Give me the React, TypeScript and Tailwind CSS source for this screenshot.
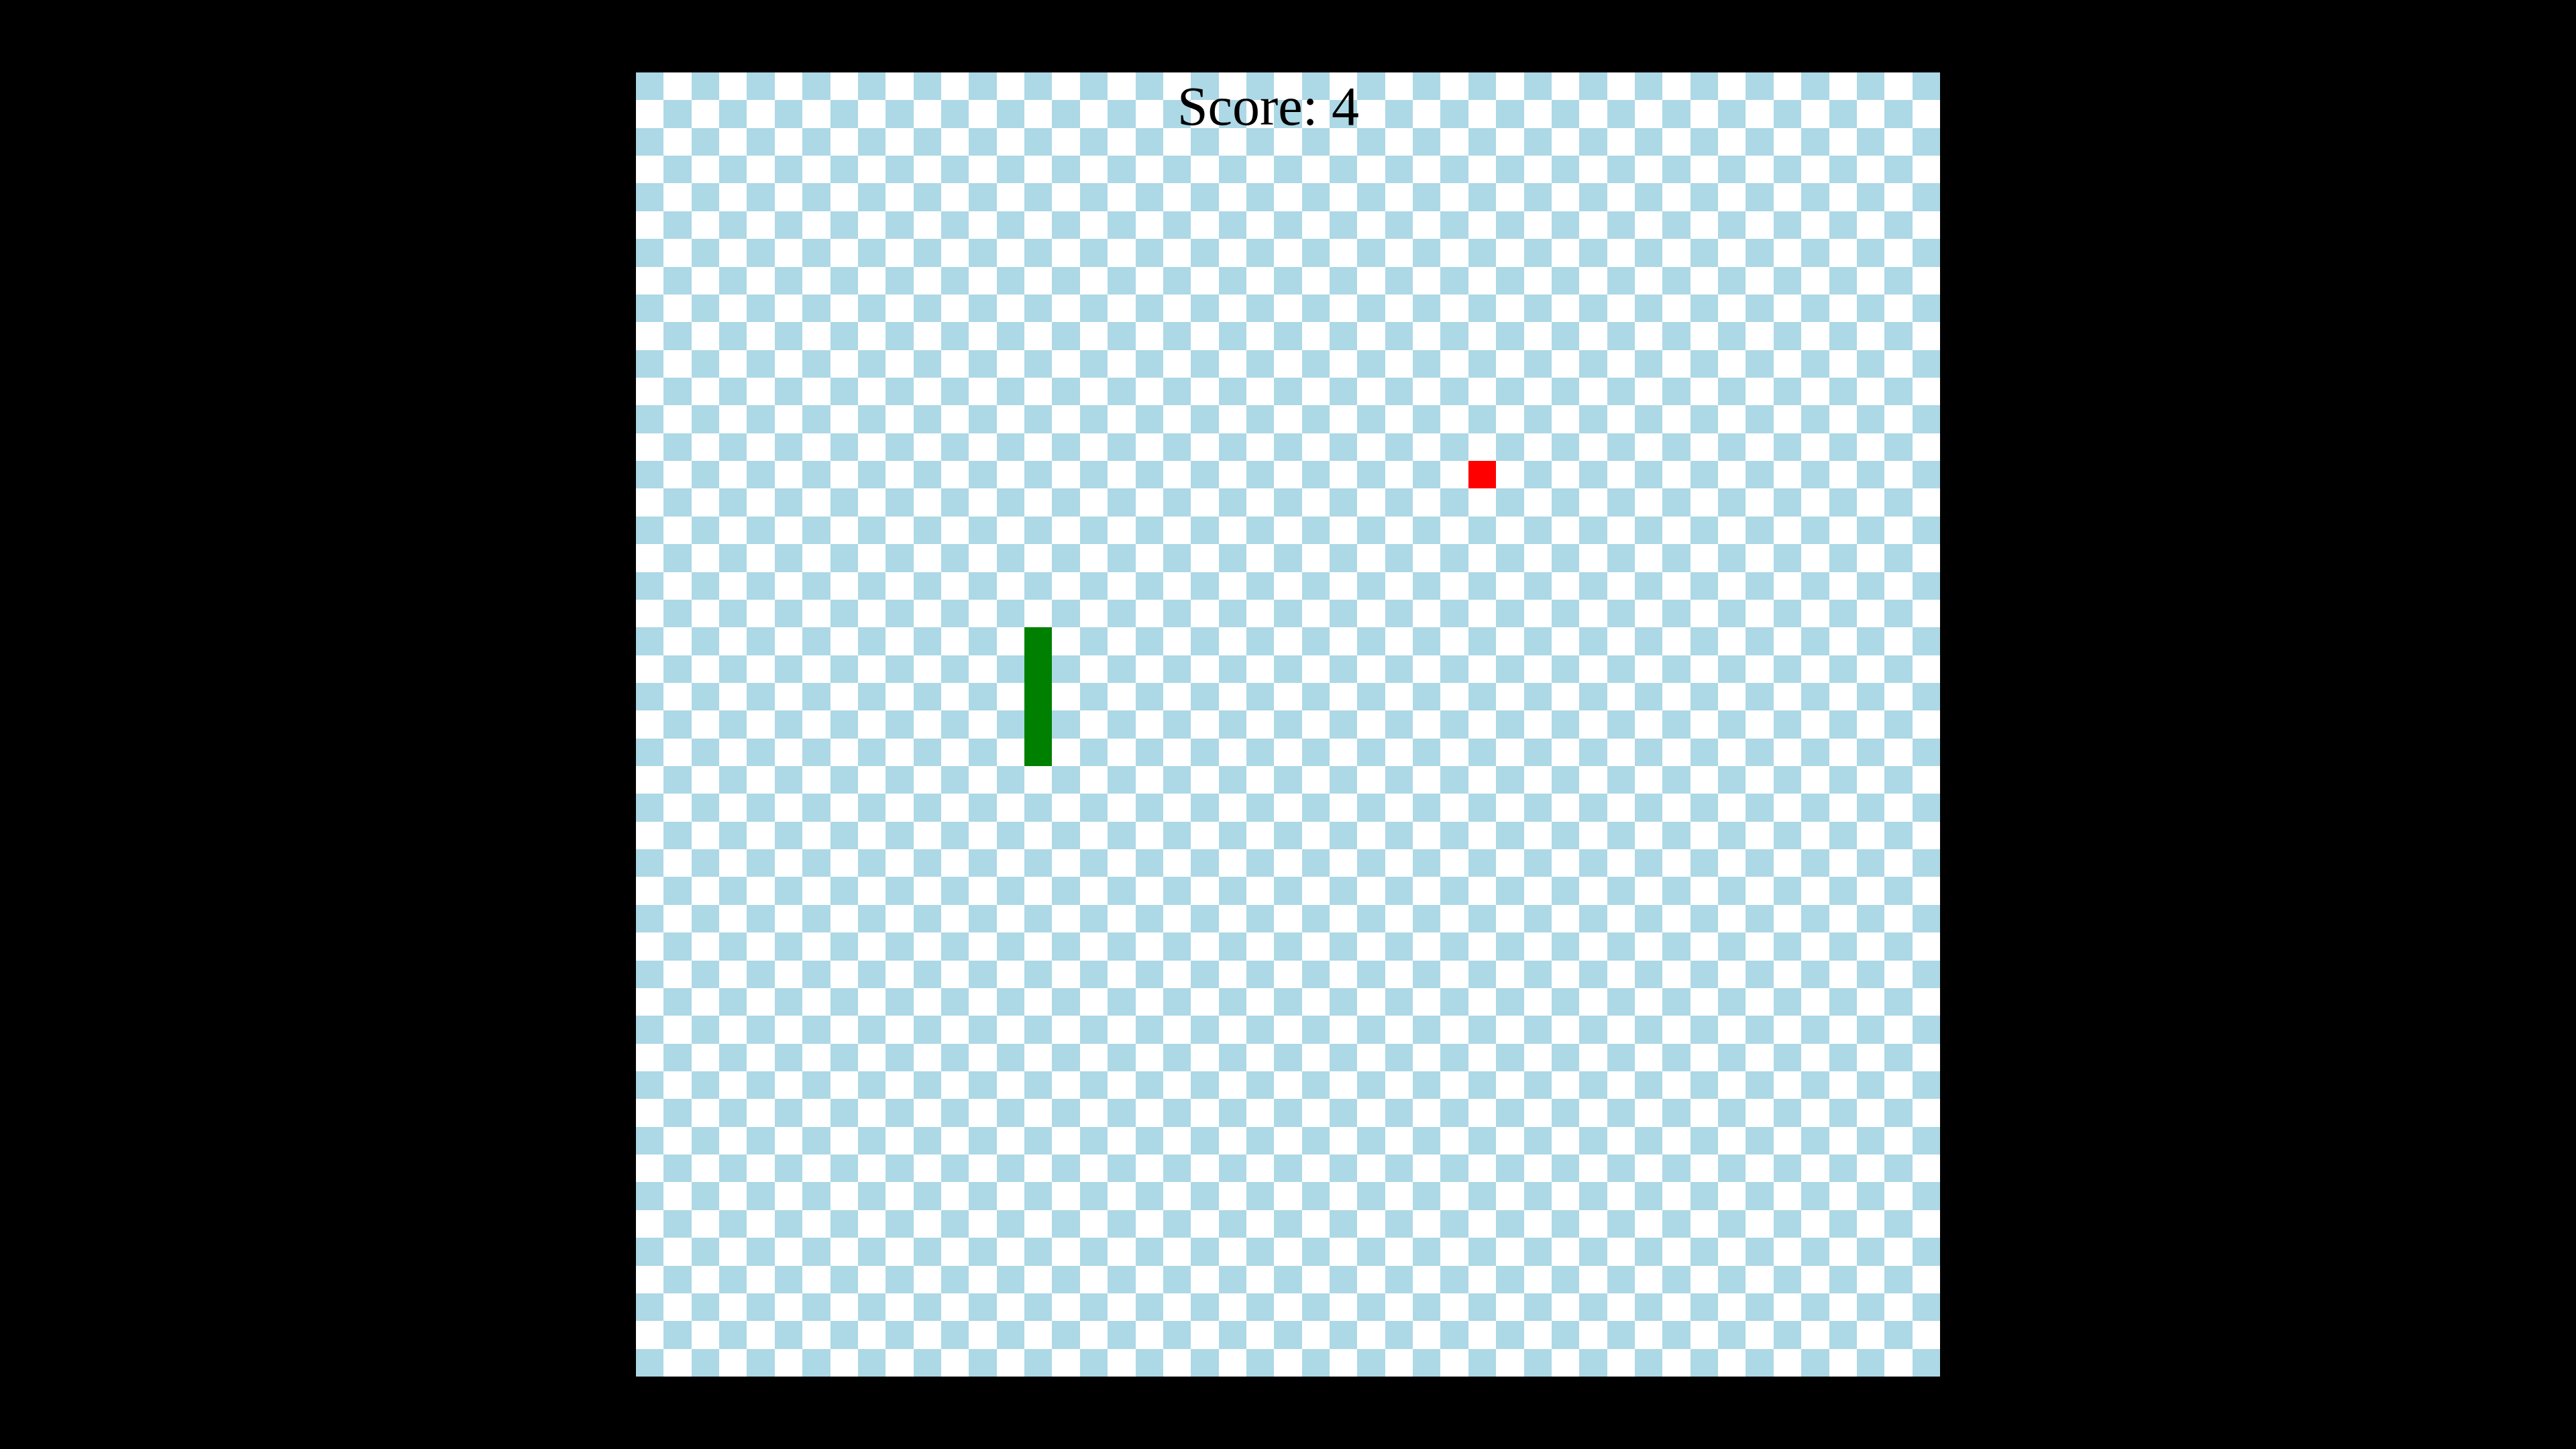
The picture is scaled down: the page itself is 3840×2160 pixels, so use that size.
import React from 'react';

const SIZE = 47;
const snake = [
  { x: 14, y: 20 },
  { x: 14, y: 21 },
  { x: 14, y: 22 },
  { x: 14, y: 23 },
  { x: 14, y: 24 },
];
const food = { x: 30, y: 14 };

const cellClass = (x: number, y: number) => {
  if (snake.some((s) => s.x === x && s.y === y)) return 'bg-[#008000]';
  if (food.x === x && food.y === y) return 'bg-[#ff0000]';
  return (x + y) % 2 === 0 ? 'bg-[#add8e6]' : 'bg-white';
};

const App: React.FC = () => {
  const cells = [];
  for (let y = 0; y < SIZE; y++) {
    for (let x = 0; x < SIZE; x++) {
      cells.push(<div key={`${x}-${y}`} className={cellClass(x, y)} />);
    }
  }

  return (
    <div className="w-screen h-screen bg-black flex items-center justify-center">
      <div className="relative w-[1944px] h-[1944px]">
        <div className="grid grid-cols-[repeat(47,1fr)] grid-rows-[repeat(47,1fr)] w-full h-full">
          {cells}
        </div>
        {/* Score */}
        <div className="absolute top-[-11px] left-[807px] text-[82px] leading-normal text-black font-['Liberation_Serif',serif] whitespace-nowrap">
          Score: 4
        </div>
      </div>
    </div>
  );
};

export default App;
